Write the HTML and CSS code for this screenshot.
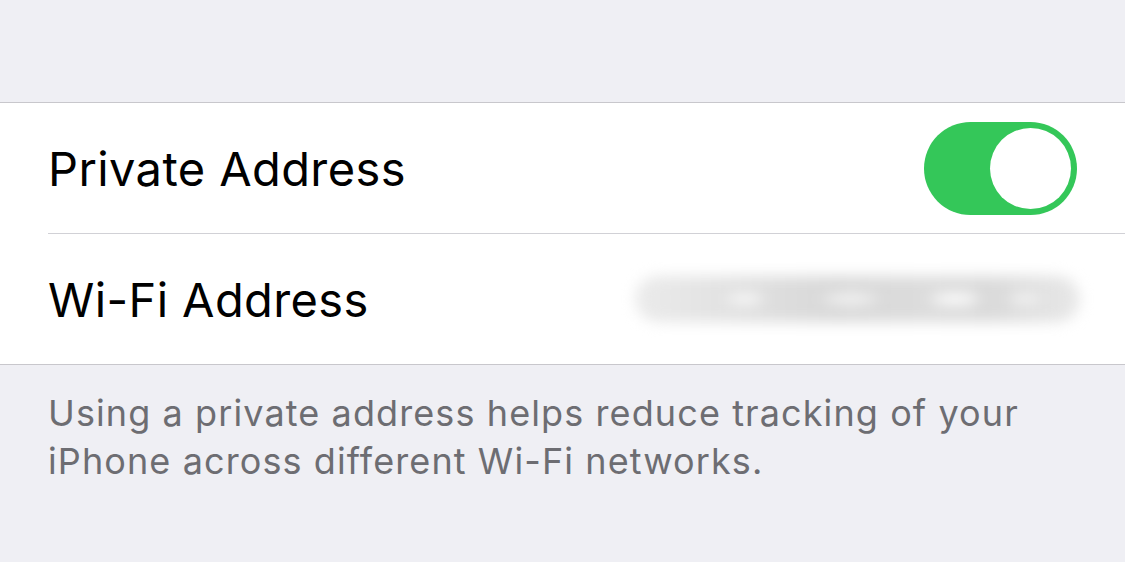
FILE: index.html
```html
<!DOCTYPE html>
<html lang="en">
<head>
    <meta charset="UTF-8">
    <title>Private Address</title>
    <link rel="stylesheet" href="styles.css">
</head>
<body>
    <div class="top-space"></div>

    <section class="group">
        <div class="row">
            <span class="label">Private Address</span>
            <div class="toggle on">
                <div class="knob"></div>
            </div>
        </div>
        <div class="row last">
            <span class="label">Wi-Fi Address</span>
            <div class="blurred"></div>
        </div>
    </section>

    <p class="footer">Using a private address helps reduce tracking of your iPhone across different Wi-Fi networks.</p>
</body>
</html>
```

FILE: styles.css
```css
body {
    margin: 0;
    background-color: #efeff4;
    font-family: Inter, "Noto Sans", sans-serif;
    height: 562px;
    overflow: hidden;
}

.top-space {
    height: 102px;
}

.group {
    background-color: #fff;
    border-top: 1px solid #c8c7cc;
    border-bottom: 1px solid #c8c7cc;
    padding-left: 48px;
}

.row {
    height: 130px;
    display: flex;
    align-items: center;
    justify-content: space-between;
    padding-right: 48px;
    border-bottom: 1px solid #d1d1d6;
}

.row.last {
    border-bottom: none;
}

.label {
    font-size: 47px;
    color: #000;
    letter-spacing: 0.4px;
}

.toggle {
    width: 153px;
    height: 93px;
    border-radius: 47px;
    background-color: #34c759;
    position: relative;
    margin-top: 1px;
}

.knob {
    position: absolute;
    top: 6px;
    right: 6px;
    width: 81px;
    height: 81px;
    border-radius: 50%;
    background-color: #fff;
}

.blurred {
    width: 445px;
    height: 46px;
    margin-right: -3px;
    border-radius: 24px;
    background:
        radial-gradient(ellipse 30px 9px at 110px 50%, #fafafa 40%, transparent 75%),
        radial-gradient(ellipse 45px 10px at 215px 50%, #f4f4f4 40%, transparent 75%),
        radial-gradient(ellipse 40px 10px at 320px 50%, #fff 40%, transparent 75%),
        radial-gradient(ellipse 25px 8px at 390px 50%, #f6f6f6 40%, transparent 75%),
        linear-gradient(90deg, #ebebeb, #e0e0e0 25%, #d8d8d8 45%, #dcdcdc 65%, #dadada 80%, #e8e8e8);
    filter: blur(7px);
}

.footer {
    margin: 0;
    padding: 24px 60px 0 48px;
    font-size: 36px;
    line-height: 48px;
    color: #6d6d72;
    letter-spacing: 1.1px;
}
```
